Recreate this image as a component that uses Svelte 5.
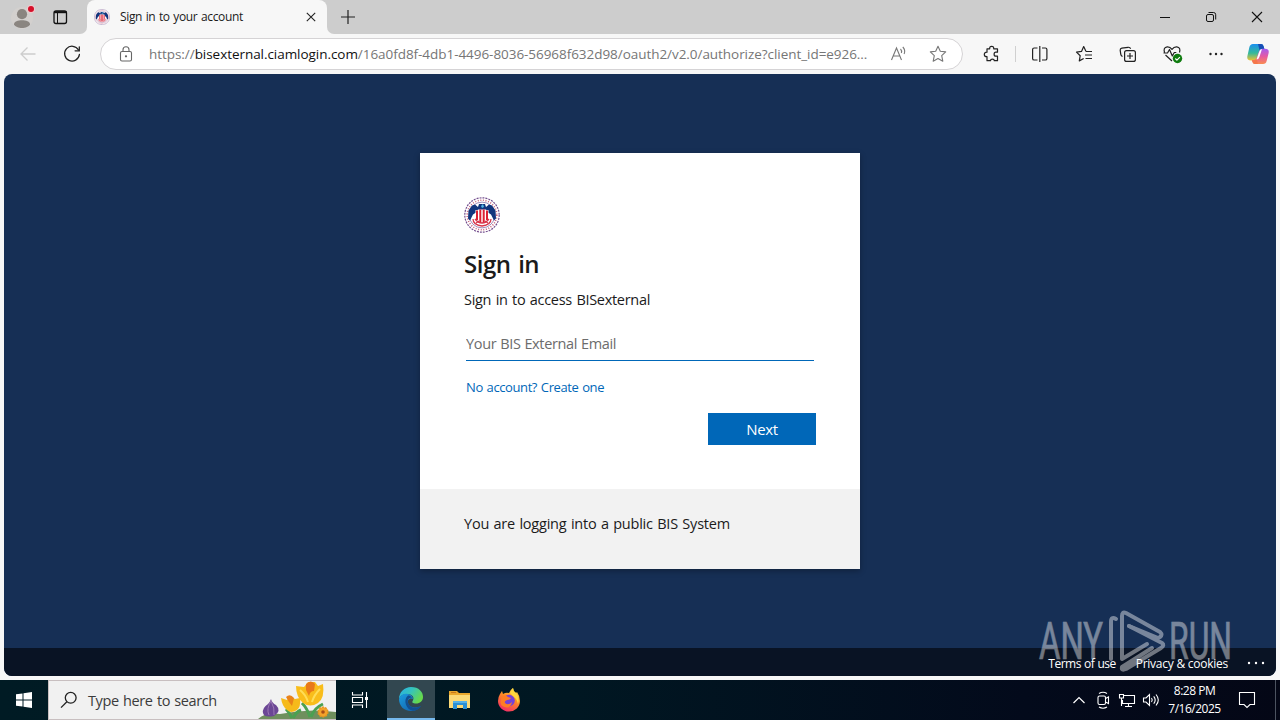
<script lang="ts">
  const urlHead = "https://";
  const urlHost = "bisexternal.ciamlogin.com";
  const urlPath = "/16a0fd8f-4db1-4496-8036-56968f632d98/oauth2/v2.0/authorize?client_id=e926...";

  let email = $state("");
</script>

{#snippet seal(size: number)}
  <svg width={size} height={size} viewBox="0 0 36 36">
    <circle cx="18" cy="18" r="17.2" fill="#fff" stroke="#75508f" stroke-width="1.2" stroke-dasharray="2 1" />
    <circle cx="18" cy="18" r="14.8" fill="none" stroke="#c9607a" stroke-width="1.6" stroke-dasharray="1 1.6" />
    <circle cx="18" cy="18" r="12.9" fill="none" stroke="#8871a8" stroke-width=".8" />
    <path d="M15 7h6l1 3 3-2.500 3 1 3.500 5 .5 8-2 2-3-6-3-2-2-3h-8l-2 3-3 2-3 6-2-2 .5-8 3.500-5 3-1 3 2.500z" fill="#12357d" />
    <path d="M17 9l2-2 1 3-2 1z" fill="#55b7e6" />
    <path d="M11.500 13h13v9q-1 3-6.500 5-5.500-2-6.500-5z" fill="#fff" />
    <path d="M13 13.500v9.500M16.300 12.500V26M19.700 12.500V26M23 13.500v9.500" stroke="#dd1f33" stroke-width="2" />
    <path d="M9 22q0 6 9 7 9-1 9-7M11 22q3 4 7 4t7-4M12 26l3-2M24 26l-3-2" fill="none" stroke="#d8354a" stroke-width="1.300" />
  </svg>
{/snippet}

<div class="screen">
  <header class="tabstrip">
    <div class="strip-left">
      <svg width="87" height="34" viewBox="0 0 87 34">
        <circle cx="22" cy="18" r="11" fill="#d3d0ce" />
        <circle cx="22" cy="14.2" r="5.1" fill="#8a8580" />
        <path d="M14 24.2c0-5.2 16-5.2 16 0-2 5-14 5-16 0z" fill="#8a8580" />
        <circle cx="31" cy="9" r="4" fill="#f1c9cc" />
        <circle cx="31" cy="9" r="3" fill="#d5102a" />
        <rect x="54" y="11" width="12.5" height="12.5" rx="2" fill="none" stroke="#111" stroke-width="1.3" />
        <path d="M54 12.2h12.5" stroke="#111" stroke-width="2" />
        <path d="M57.5 13v10" stroke="#111" />
      </svg>
    </div>
    <div class="tab-holder">
      <div class="tab">
        {@render seal(16)}
        <span class="tab-title">Sign in to your account</span>
        <svg class="tab-close" width="10" height="10" viewBox="0 0 10 10">
          <path d="M.8.8l8.4 8.4M9.2.8L.8 9.2" stroke="#222" stroke-width="1.1" />
        </svg>
      </div>
    </div>
    <div class="strip-right">
      <svg width="14" height="14" viewBox="0 0 14 14">
        <path d="M7 0v14M0 7h14" stroke="#222" stroke-width="1.2" />
      </svg>
      <div class="window-buttons">
        <svg width="46" height="34" viewBox="0 0 46 34"><path d="M18 17.5h10" stroke="#111" /></svg>
        <svg width="46" height="34" viewBox="0 0 46 34" fill="none" stroke="#111">
          <rect x="18.5" y="14.5" width="7" height="7" rx="1.5" />
          <path d="M20.5 12.5h5q2.2 0 2.2 2.2v4.8" />
        </svg>
        <svg width="46" height="34" viewBox="0 0 46 34"><path d="M18 12l10 10M28 12L18 22" stroke="#111" stroke-width="1.1" /></svg>
      </div>
    </div>
  </header>

  <nav class="toolbar">
    <div class="nav-buttons">
      <svg width="44" height="40" viewBox="0 0 44 40" fill="none" stroke="#cdcdcd" stroke-width="1.3">
        <path d="M29.5 20H15M21.5 13.5L15 20l6.5 6.5" />
      </svg>
      <svg width="44" height="40" viewBox="0 0 44 40" fill="none" stroke="#222" stroke-width="1.3" stroke-linecap="round">
        <path d="M28.5 16A7.4 7.4 0 1 0 29.4 20.5" />
        <path d="M29.3 12.8v4h-4.2" />
      </svg>
    </div>
    <div class="address">
      <svg width="14" height="17" viewBox="0 0 14 17" fill="none" stroke="#666" stroke-width="1.1">
        <rect x="1.5" y="5.5" width="11" height="9.5" rx="1.5" />
        <path d="M4 5.5V3.8a3 3 0 0 1 6 0v1.7" />
        <circle cx="7" cy="10.3" r=".6" fill="#666" />
      </svg>
      <span class="url">{urlHead}<b>{urlHost}</b>{urlPath}</span>
      <svg class="read-aloud" width="18" height="18" viewBox="0 0 18 18" fill="none" stroke="#777" stroke-width="1.1">
        <path d="M2.5 15l5-12 5 12M4.2 11h6.6M11.5 4q1.6 1.7.9 4M13.8 2q3 3.2 1.3 7" />
      </svg>
      <svg width="18" height="18" viewBox="0 0 18 18" fill="none" stroke="#777" stroke-width="1.1" stroke-linejoin="round">
        <path d="M9 1.3l2.3 5 5.4.6-4 3.8 1.1 5.5L9 13.6l-4.8 2.6 1.1-5.5-4-3.8 5.4-.6z" />
      </svg>
    </div>
    <div class="actions">
      <svg width="44" height="40" viewBox="0 0 44 40" fill="none" stroke="#222" stroke-width="1.2" stroke-linejoin="round">
        <path d="M17 14.8h2.700q-.2-2.500 2-2.500t2 2.500h3.800v3.400h-1.600q-1.800 0-1.800 2t1.800 2h1.600v4.500h-3.200q0-1.600-1.900-1.600t-1.900 1.600H17v-4q-2.700 0-2.700-2.300t2.700-2.200z" />
      </svg>
      <i class="divider"></i>
      <svg width="44" height="40" viewBox="0 0 44 40" fill="none" stroke="#222" stroke-width="1.2">
        <path d="M19.5 14h-3.300q-1.600 0-1.600 1.600v8.800q0 1.600 1.600 1.600h3.300M24 14h3.300q1.600 0 1.600 1.600v8.800q0 1.600-1.600 1.600H24M21.800 12v16" />
      </svg>
      <svg width="44" height="40" viewBox="0 0 44 40" fill="none" stroke="#222" stroke-width="1.2" stroke-linejoin="round">
        <path d="M24 17.4l-2.300-4.800-2.200 4.800-5 .7 3.700 3.600-.9 5.200 4.400-2.400M24 17.5h6M23 21h7M23.500 24.500H30" />
      </svg>
      <svg width="44" height="40" viewBox="0 0 44 40" fill="none" stroke="#222" stroke-width="1.2">
        <rect x="18.6" y="16.6" width="10.8" height="10.8" rx="2" />
        <path d="M24 19v6M21 22h6M16.500 22.500q-1.500-.7-1.700-2.200l-.6-4q-.2-1.800 1.600-2.100l6.200-.9q2-.3 2.600 1.500" />
      </svg>
      <svg width="44" height="40" viewBox="0 0 44 40" fill="none" stroke="#222" stroke-width="1.2" stroke-linejoin="round">
        <path d="M14.500 18.500q-1.500-5 2.700-5.600 2.900-.2 4.800 2.500 1.900-2.700 4.800-2.500 4.200.6 2.700 5.600M15.500 21l6.500 6M13.500 19h4l2-3.500 2.800 6.500 2-3.500h2" />
        <circle cx="27.5" cy="24.5" r="4.7" fill="#107c10" stroke="none" />
        <path d="M25.3 24.5l1.600 1.600 3-3" stroke="#fff" />
      </svg>
      <svg width="44" height="40" viewBox="0 0 44 40" fill="#222">
        <circle cx="16.500" cy="20" r="1.2" /><circle cx="22" cy="20" r="1.2" /><circle cx="27.500" cy="20" r="1.2" />
      </svg>
      <svg width="40" height="40" viewBox="0 0 40 40">
        <defs>
          <linearGradient id="cp1" x1="0" y1="0" x2="0" y2="1">
            <stop offset="0" stop-color="#1a8ff0" /><stop offset=".55" stop-color="#35b99a" /><stop offset="1" stop-color="#f1c232" />
          </linearGradient>
          <linearGradient id="cp2" x1="0" y1="0" x2="0" y2="1">
            <stop offset="0" stop-color="#a45df0" /><stop offset=".5" stop-color="#e65aa2" /><stop offset="1" stop-color="#f98b50" />
          </linearGradient>
        </defs>
        <path d="M15 10h8q2 0 2.500 2l.8 3h-2q-2 0-2.800 2.300L19 24q-.8 2.500-3.300 2.500h-2.400q-4.700 0-4-4l2-9Q12 10 15 10z" fill="url(#cp1)" />
        <path d="M20 10h3q2 0 2.500 2l.9 3h-2.200q-2 0-2.700 1z" fill="#174eb5" />
        <path d="M25 30h-8q-2 0-2.500-2l-.6-2h2q2 0 2.800-2.300l2.300-6.400q.9-2.500 3.300-2.500H27q4.400 0 3.700 4l-2 8Q28 30 25 30z" fill="url(#cp2)" />
        <path d="M14 26.300h2q2 0 2.800-2.500l1 6.200H17q-2 0-2.500-2z" fill="#f5774b" />
        <path d="M18.500 25.500l2.800-8q.8-2.300 2.700-2.600l-2.600 8q-.9 2.600-2.900 2.600z" fill="#fff" />
      </svg>
    </div>
  </nav>

  <main class="page">
    <section class="card">
      <form class="signin" onsubmit={(e) => e.preventDefault()}>
        {@render seal(36)}
        <h1>Sign in</h1>
        <p class="hint">Sign in to access BISexternal</p>
        <input type="text" placeholder="Your BIS External Email" bind:value={email} />
        <a class="create" href="#create">No account? Create one</a>
        <button type="submit">Next</button>
      </form>
      <div class="boilerplate">You are logging into a public BIS System</div>
    </section>

    <footer class="page-footer">
      <span class="terms">Terms of use</span>
      <span class="privacy">Privacy &amp; cookies</span>
      <svg width="18" height="4" viewBox="0 0 18 4" fill="#fff">
        <circle cx="2" cy="2" r="1.2" /><circle cx="9" cy="2" r="1.2" /><circle cx="16" cy="2" r="1.2" />
      </svg>
    </footer>

    <svg class="watermark" width="204" height="72" viewBox="0 0 204 72">
      <g fill="#fff" stroke="#fff" stroke-width=".7" font-family="Roboto, sans-serif" font-size="52">
        <text x="5" y="55" textLength="64" lengthAdjust="spacingAndGlyphs">ANY</text>
        <text x="135" y="55" textLength="63" lengthAdjust="spacingAndGlyphs">RUN</text>
      </g>
      <g fill="none" stroke="#fff" stroke-width="4" stroke-linejoin="round" stroke-linecap="round">
        <path d="M82 15q-5-3-5 3v37" />
        <path d="M88 54V12q0-5 4-3l34 19q3 3 0 5l-2 1-29-12" />
        <path d="M95 22l33 17q3 2-1 5L92 65q-5 2-4-2l30-19" />
        <path d="M88 55l25-15" />
      </g>
    </svg>
  </main>

  <div class="taskbar">
    <div class="start">
      <svg width="16" height="16" viewBox="0 0 16 16" fill="#fff">
        <path d="M0 2.3l6.5-.9v6.1H0zM7.5 1.2L16 0v7.5H7.5zM0 8.5h6.5v6.1L0 13.7zM7.5 8.5H16V16l-8.5-1.2z" />
      </svg>
    </div>
    <div class="search">
      <svg width="18" height="18" viewBox="0 0 18 18" fill="none" stroke="#222" stroke-width="1.3">
        <circle cx="10.7" cy="6.8" r="5.4" /><path d="M6.9 10.7L1 16.6" />
      </svg>
      <span>Type here to search</span>
      <svg class="flowers" width="78" height="38" viewBox="0 0 78 38">
        <path d="M0 38q8-7 22-5 28-6 56-2v7z" fill="#6f8f5d" />
        <path d="M34 37q-3-6-6-9M35 37q3-6 8-8M52 36q-3-9-8-14M53 36q3-9 12-13" fill="none" stroke="#4ba051" stroke-width="3" />
        <path d="M9 18q1 4 5 6 6 6-2 11-10 2-11-3-1-5 5-9 2-2 3-5z" fill="#6b4695" transform="translate(4 0)" />
        <path d="M13 20q-5 8-2 14M13 20q4 7 3 14" fill="none" stroke="#9b78b5" />
        <path d="M23 17l6 2 3-4 5 3 5-1q1 9-3 12-6 4-10 0-5-4-6-12z" fill="#f6ba1b" />
        <path d="M28 16q4-4 8 1l-2 8-3-4z" fill="#e98219" />
        <path d="M38 5l8 1 4-5 7 0 3 4 5-2q2 14-5 19-8 5-15 0-7-6-7-17z" fill="#f9bd1b" />
        <path d="M48 3q5-5 9 0l-1 7q-4 0-5 5l-3-6z" fill="#e97919" />
        <path d="M42 9q6 5 8 12M62 8q-6 6-8 13" fill="none" stroke="#ffdd57" stroke-width="2" />
        <circle cx="65" cy="31" r="4.8" fill="#f4a22b" stroke="#e6951f" stroke-width="1.5" stroke-dasharray="2 1" />
        <circle cx="65" cy="31" r="1.8" fill="#a84d17" />
      </svg>
    </div>
    <div class="task view">
      <svg width="18" height="18" viewBox="0 0 18 18" fill="none" stroke="#fff" stroke-width="1.1">
        <path d="M1.5 1v3h10V1M1.5 17v-3h10v3M1.5 6.5h10v5h-10zM15.5 1v16" />
        <path d="M14 6h3v3h-3z" fill="#fff" stroke="none" />
      </svg>
    </div>
    <div class="task active">
      <svg width="26" height="26" viewBox="0 0 26 26">
        <defs>
          <linearGradient id="edgeTop" x1="0" y1="0" x2="1" y2=".5">
            <stop offset="0" stop-color="#28aee8" /><stop offset=".5" stop-color="#35c3bd" /><stop offset="1" stop-color="#66d94c" />
          </linearGradient>
          <linearGradient id="edgeLow" x1="0" y1="0" x2="1" y2="1">
            <stop offset="0" stop-color="#1b9de0" /><stop offset="1" stop-color="#1259a3" />
          </linearGradient>
        </defs>
        <path d="M1 13A12 12 0 0 1 13 1c8 0 12 5 12 10 0 4-3 6.500-7 6.500-3 0-4.500-1-3.300-2.500C17 11 14 8 9 8c-4 0-7 2-8 5z" fill="url(#edgeTop)" />
        <path d="M1 13c1-4 5-6 9-5 3 .5 5 2.700 5 5-3-1.800-6 1-5 4 1 4 6 6 13 3-2 3-5.500 5-10 5C6 25 1 20 1 13z" fill="url(#edgeLow)" />
        <path d="M9.500 10C5 14 8 24 15 24.800 19 24.500 21.500 22.500 23 20c-5 3-11 2-13-3-1-3 1-6 4-5-1-2-3-3-4.500-2z" fill="#124f91" />
      </svg>
    </div>
    <div class="task">
      <svg width="22" height="20" viewBox="0 0 22 20">
        <path d="M0 1h8l2 2h11v15H0z" fill="#e9a72c" />
        <path d="M0 5h21v13H0z" fill="#fbd976" />
        <path d="M2 2.5h5" stroke="#c97919" />
        <path d="M4 11h14v8h-4v-4H8v4H4z" fill="#2a8fd4" />
        <path d="M4 11h14v2H4z" fill="#55b0e6" />
      </svg>
    </div>
    <div class="task">
      <svg width="24" height="24" viewBox="0 0 24 24">
        <defs>
          <linearGradient id="fox" x1=".8" y1="0" x2=".3" y2="1">
            <stop offset="0" stop-color="#ffe047" /><stop offset=".45" stop-color="#ff8a24" /><stop offset="1" stop-color="#f32b68" />
          </linearGradient>
        </defs>
        <path d="M3 6l2-3 1 3q3-2 6-1 1-3 4-5 0 3 3 5l1-1q3 4 3 9a11 10.500 0 0 1-22 0q0-4 2-7z" fill="url(#fox)" />
        <circle cx="12" cy="12.5" r="5.8" fill="#7542d8" />
        <path d="M4.500 9q4-3 6.500 0l3 1q-1 2-4 2-3 1-2 3 3 3 7-1-1 5-5 5.500-6-.5-6.500-5z" fill="#ff7d24" />
        <path d="M13 5q2-4 3-5 0 3 3 5 4 5 2 11-1-5-4-7-2-2-4-4z" fill="#ffd83e" />
      </svg>
    </div>

    <div class="tray">
      <svg width="24" height="40" viewBox="0 0 24 40" fill="none" stroke="#fff" stroke-width="1.2"><path d="M6.500 23l5.500-5.500 5.500 5.500" /></svg>
      <svg width="24" height="40" viewBox="0 0 24 40" fill="none" stroke="#fff" stroke-width="1.1">
        <rect x="7" y="16" width="7.5" height="8.5" rx="1.5" />
        <path d="M14.500 18.500l3-1.500v6.500l-3-1.500M8 13.500q4-2.500 8 0M8 27q4 2.500 8 0" />
      </svg>
      <svg width="24" height="40" viewBox="0 0 24 40" fill="none" stroke="#fff" stroke-width="1.1">
        <path d="M9 15.500h10.500v8H7.500V20M13.500 23.500v3M10 26.500h7M4.500 14.500h4v3.500h-4zM6.500 18v8" />
      </svg>
      <svg width="24" height="40" viewBox="0 0 24 40" fill="none" stroke="#fff" stroke-width="1.1">
        <path d="M4.500 18H7l3.500-3.500v11L7 22H4.500zM12.500 18q1.500 2 0 4M14.700 16.300q3 3.700 0 7.400M17 14.500q4.600 5.500 0 11" />
      </svg>
      <div class="clock"><span>8:28 PM</span><span>7/16/2025</span></div>
      <svg width="52" height="40" viewBox="0 0 52 40" fill="none" stroke="#fff" stroke-width="1.1">
        <path d="M18.500 12.500h15v12H29l-3 3-3-3h-4.500z" />
      </svg>
      <i class="show-desktop"></i>
    </div>
  </div>
</div>

<style>
  :global(body) {
    margin: 0;
    overflow: hidden;
  }

  .screen {
    display: flex;
    flex-direction: column;
    width: 1280px;
    height: 720px;
    background: #f7f7f7;
    font-family: "Open Sans", "Noto Sans", sans-serif;
    color: #1b1b1b;
  }

  svg {
    display: block;
    flex: none;
  }

  span {
    white-space: nowrap;
  }

  .tabstrip {
    display: flex;
    height: 34px;
  }

  .strip-left,
  .strip-right {
    background: #cdcdcd;
  }

  .strip-left {
    width: 87px;
    border-bottom-right-radius: 7px;
  }

  .tab-holder {
    width: 240px;
    background: linear-gradient(#cdcdcd 50%, #f7f7f7 50%);
  }

  .tab {
    display: flex;
    align-items: center;
    height: 34px;
    padding: 0 11px 0 7px;
    box-sizing: border-box;
    background: #f7f7f7;
    border-radius: 8px 8px 0 0;
  }

  .tab-title {
    margin-left: 10px;
    padding-bottom: 1px;
    font-size: 12px;
    letter-spacing: -0.35px;
    word-spacing: 0.8px;
  }

  .tab-close {
    margin-left: auto;
  }

  .strip-right {
    display: flex;
    flex: 1;
    align-items: center;
    justify-content: space-between;
    padding-left: 14px;
    border-bottom-left-radius: 7px;
  }

  .window-buttons {
    display: flex;
  }

  .toolbar {
    display: flex;
    align-items: center;
    height: 40px;
  }

  .nav-buttons {
    display: flex;
    width: 94px;
    padding-left: 6px;
  }

  .address {
    display: flex;
    align-items: center;
    box-sizing: border-box;
    width: 863px;
    height: 32px;
    padding: 0 15px 0 18px;
    background: #fff;
    border: 1px solid #d5d3d5;
    border-radius: 16px;
  }

  .url {
    margin-left: 16px;
    font-size: 13.5px;
    letter-spacing: -0.05px;
    color: #767676;
  }

  .url b {
    font-weight: 400;
    color: #111;
  }

  .read-aloud {
    margin: 0 22px 0 auto;
  }

  .actions {
    display: flex;
    align-items: center;
    padding-left: 7px;
  }

  .divider {
    width: 1px;
    height: 16px;
    margin: 0 2px 0 1px;
    background: #d0d0d0;
  }

  .page {
    position: relative;
    display: flex;
    flex-direction: column;
    align-items: center;
    height: 602px;
    margin: 0 4px 4px;
    overflow: hidden;
    background: #162f55;
    border-radius: 8px;
  }

  .card {
    width: 440px;
    margin-top: 79px;
    background: #fff;
    box-shadow: 0 2px 6px rgba(0, 0, 0, 0.3);
  }

  .signin {
    display: flex;
    flex-direction: column;
    box-sizing: border-box;
    height: 336px;
    padding: 44px;
  }

  h1 {
    margin: 15px 0 0;
    font-size: 24px;
    line-height: 32px;
    font-weight: 600;
    letter-spacing: -0.5px;
    word-spacing: 2px;
  }

  .hint {
    margin: 10px 0 0;
    font-size: 14.5px;
    line-height: 20px;
    letter-spacing: -0.3px;
    word-spacing: 1px;
  }

  input {
    box-sizing: border-box;
    width: 348px;
    height: 36px;
    margin: 15px 0 0 2px;
    padding: 2px 0 0;
    border: 0;
    border-bottom: 1px solid #0067b8;
    outline: 0;
    font: inherit;
    font-size: 14.5px;
    letter-spacing: -0.35px;
    word-spacing: 0.5px;
  }

  input::placeholder {
    color: #6c6c6c;
    opacity: 1;
  }

  .create {
    align-self: flex-start;
    margin: 16px 0 0 2px;
    font-size: 13px;
    line-height: 20px;
    letter-spacing: -0.4px;
    word-spacing: 0.8px;
    color: #0067b8;
    text-decoration: none;
  }

  button {
    align-self: flex-end;
    width: 108px;
    height: 32px;
    margin-top: 16px;
    padding: 0;
    border: 0;
    background: #0067b8;
    color: #fff;
    font: inherit;
    font-size: 15px;
    font-weight: 500;
    letter-spacing: -0.4px;
  }

  .boilerplate {
    box-sizing: border-box;
    height: 80px;
    padding: 25px 44px;
    background: #f2f2f2;
    font-size: 14.5px;
    line-height: 20px;
    letter-spacing: -0.22px;
    word-spacing: 0.9px;
  }

  .page-footer {
    display: flex;
    align-items: center;
    justify-content: flex-end;
    box-sizing: border-box;
    width: 100%;
    height: 28px;
    margin-top: auto;
    padding: 2px 11px 0 0;
    background: #091324;
    color: #fff;
    font-size: 12px;
    font-weight: 500;
  }

  .page-footer > * {
    position: relative;
    z-index: 2;
  }

  .terms {
    letter-spacing: -0.5px;
    word-spacing: 0.5px;
  }

  .privacy {
    margin: 0 19px 0 20px;
    letter-spacing: -0.25px;
  }

  .watermark {
    position: absolute;
    right: 38px;
    bottom: 0;
    opacity: 0.42;
  }

  .taskbar {
    display: flex;
    height: 40px;
    background: linear-gradient(90deg, #001b24 0, #001722 45%, #030a1b 80%, #040716 100%);
  }

  .start {
    display: flex;
    align-items: center;
    justify-content: center;
    width: 48px;
  }

  .search {
    display: flex;
    align-items: center;
    box-sizing: border-box;
    width: 288px;
    padding-left: 11px;
    background: #f1f1f1;
    border: 1px solid #c8bfc0;
    border-right: 0;
    color: #3b3b3b;
    font-size: 14.5px;
  }

  .search span {
    margin-left: 10px;
    letter-spacing: -0.4px;
    word-spacing: 1px;
  }

  .flowers {
    margin-left: auto;
  }

  .task {
    display: flex;
    align-items: center;
    justify-content: center;
    box-sizing: border-box;
    width: 49px;
  }

  .view {
    padding-right: 2px;
  }

  .active {
    width: 48px;
    margin-left: 2px;
    background: #324750;
    border-bottom: 2px solid #76b9ed;
  }

  .tray {
    display: flex;
    margin-left: auto;
    color: #fff;
  }

  .clock {
    display: flex;
    flex-direction: column;
    align-items: center;
    box-sizing: border-box;
    width: 58px;
    padding: 2px 0 0 5px;
    font-size: 12px;
    line-height: 18px;
    letter-spacing: -0.5px;
  }

  .show-desktop {
    width: 4px;
    margin-left: 2px;
    border-left: 1px solid #4c5360;
  }
</style>
